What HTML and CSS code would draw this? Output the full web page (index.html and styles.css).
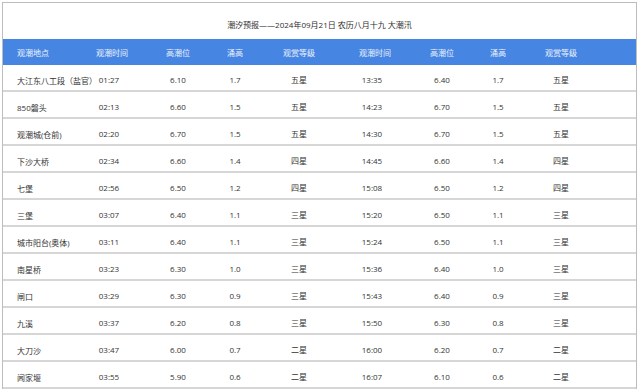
FILE: index.html
```html
<!DOCTYPE html>
<html lang="zh-CN">
<head>
<meta charset="utf-8">
<title>潮汐预报</title>
<link rel="stylesheet" href="styles.css">
</head>
<body>
<div class="panel">
  <div class="title">潮汐预报——2024年09月21日 农历八月十九 大潮汛</div>
  <table class="tide">
    <colgroup>
      <col class="c1"><col class="c2"><col class="c3"><col class="c4"><col class="c5">
      <col class="c6"><col class="c7"><col class="c8"><col class="c9"><col class="c10">
    </colgroup>
    <thead>
      <tr>
        <th class="loc">观潮地点</th><th>观潮时间</th><th>高潮位</th><th>涌高</th><th>观赏等级</th>
        <th>观潮时间</th><th>高潮位</th><th>涌高</th><th>观赏等级</th><th></th>
      </tr>
    </thead>
    <tbody>
      <tr><td class="loc">大江东八工段（盐官）</td><td class="time">01:27</td><td>6.10</td><td>1.7</td><td>五星</td><td class="time">13:35</td><td>6.40</td><td>1.7</td><td>五星</td><td></td></tr>
      <tr><td class="loc">850磐头</td><td class="time">02:13</td><td>6.60</td><td>1.5</td><td>五星</td><td class="time">14:23</td><td>6.70</td><td>1.5</td><td>五星</td><td></td></tr>
      <tr><td class="loc">观潮城(仓前)</td><td class="time">02:20</td><td>6.70</td><td>1.5</td><td>五星</td><td class="time">14:30</td><td>6.70</td><td>1.5</td><td>五星</td><td></td></tr>
      <tr><td class="loc">下沙大桥</td><td class="time">02:34</td><td>6.60</td><td>1.4</td><td>四星</td><td class="time">14:45</td><td>6.60</td><td>1.4</td><td>四星</td><td></td></tr>
      <tr><td class="loc">七堡</td><td class="time">02:56</td><td>6.50</td><td>1.2</td><td>四星</td><td class="time">15:08</td><td>6.50</td><td>1.2</td><td>四星</td><td></td></tr>
      <tr><td class="loc">三堡</td><td class="time">03:07</td><td>6.40</td><td>1.1</td><td>三星</td><td class="time">15:20</td><td>6.50</td><td>1.1</td><td>三星</td><td></td></tr>
      <tr><td class="loc">城市阳台(奥体)</td><td class="time">03:11</td><td>6.40</td><td>1.1</td><td>三星</td><td class="time">15:24</td><td>6.50</td><td>1.1</td><td>三星</td><td></td></tr>
      <tr><td class="loc">南星桥</td><td class="time">03:23</td><td>6.30</td><td>1.0</td><td>三星</td><td class="time">15:36</td><td>6.40</td><td>1.0</td><td>三星</td><td></td></tr>
      <tr><td class="loc">闸口</td><td class="time">03:29</td><td>6.30</td><td>0.9</td><td>三星</td><td class="time">15:43</td><td>6.40</td><td>0.9</td><td>三星</td><td></td></tr>
      <tr><td class="loc">九溪</td><td class="time">03:37</td><td>6.20</td><td>0.8</td><td>三星</td><td class="time">15:50</td><td>6.30</td><td>0.8</td><td>三星</td><td></td></tr>
      <tr><td class="loc">大刀沙</td><td class="time">03:47</td><td>6.00</td><td>0.7</td><td>二星</td><td class="time">16:00</td><td>6.20</td><td>0.7</td><td>二星</td><td></td></tr>
      <tr><td class="loc">闻家堰</td><td class="time">03:55</td><td>5.90</td><td>0.6</td><td>二星</td><td class="time">16:07</td><td>6.10</td><td>0.6</td><td>二星</td><td></td></tr>
    </tbody>
  </table>
</div>
</body>
</html>
```
FILE: styles.css
```css
html, body {
  margin: 0;
  padding: 0;
  background: #ffffff;
}
body {
  font-family: "Open Sans", "Noto Sans CJK SC", sans-serif;
  font-size: 8px;
  color: #333333;
}
.panel {
  margin: 2px 0 0 2px;
  width: 635px;
  box-sizing: border-box;
  border: 1px solid #bdbdbd;
  border-bottom: none;
}
.title {
  height: 36px;
  box-sizing: border-box;
  padding-top: 3px;
  line-height: 37px;
  text-align: center;
  color: #2e2e2e;
  font-size: 8px;
}
.tide {
  width: 633px;
  border-collapse: collapse;
  table-layout: fixed;
}
.c1 { width: 77px; }
.c2 { width: 64px; }
.c3 { width: 68px; }
.c4 { width: 46px; }
.c5 { width: 82px; }
.c6 { width: 70px; }
.c7 { width: 64px; }
.c8 { width: 48px; }
.c9 { width: 78px; }
.c10 { width: 36px; }
.tide th {
  background: #4685e2;
  color: #eef3fc;
  font-weight: normal;
  height: 26px;
  padding: 0;
  text-align: center;
  vertical-align: middle;
  white-space: nowrap;
}
.tide td {
  height: 22px;
  padding: 3px 0 0 0;
  text-align: center;
  vertical-align: middle;
  border-bottom: 2px solid #d6d6d6;
  white-space: nowrap;
}
.tide td.time {
  padding-right: 6px;
}
.tide .loc {
  text-align: left;
  padding-left: 14px;
}
.tide td.loc {
  padding-top: 5px;
  height: 20px;
}
```
